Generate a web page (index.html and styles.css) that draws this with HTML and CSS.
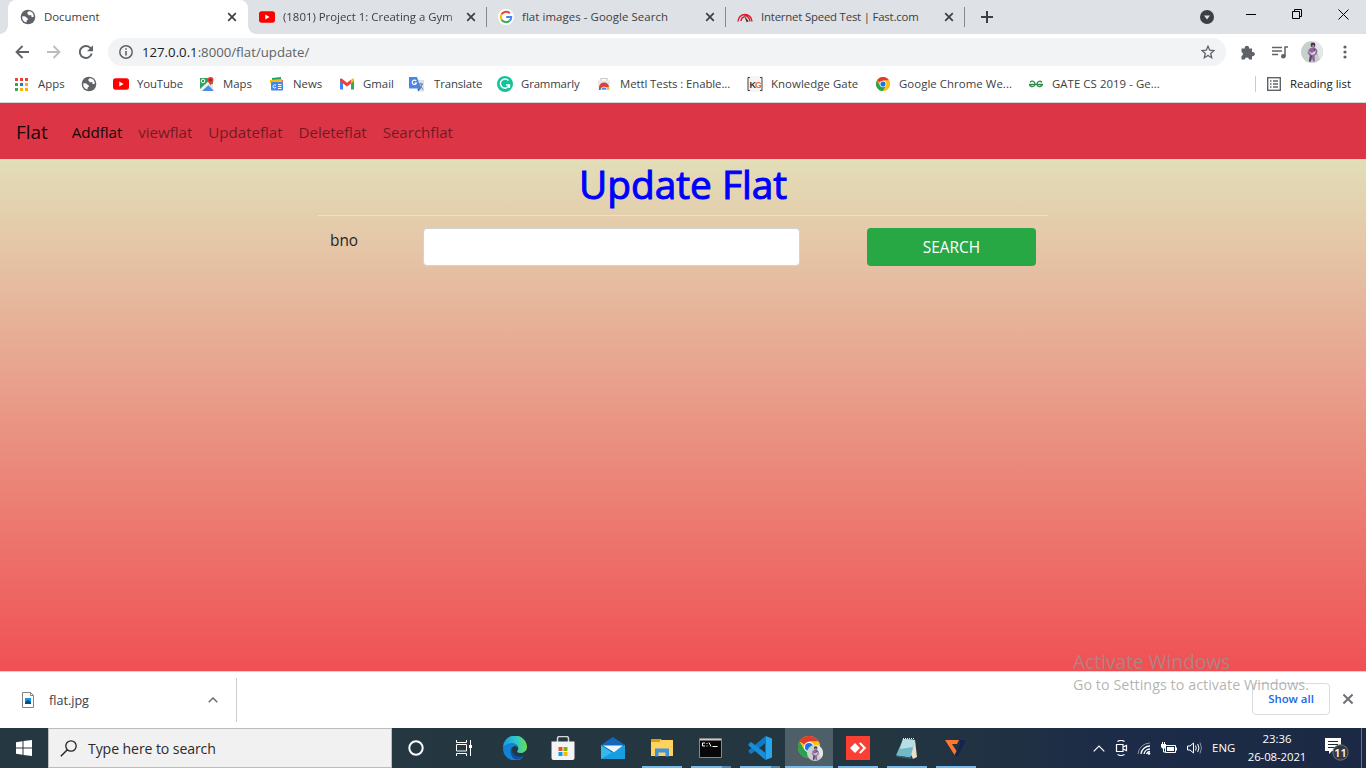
FILE: index.html
```html
<!DOCTYPE html>
<html lang="en">
<head>
<meta charset="utf-8">
<title>Document</title>
<link rel="stylesheet" href="styles.css">
</head>
<body>
<svg class="defs" width="0" height="0" aria-hidden="true">
  <symbol id="globe" viewBox="0 0 16 16"><circle cx="8" cy="8" r="7.3" fill="#5f6368"/><path d="M2.3 7.2c1.900-.1 3.800.2 4.100 1.300.3 1 1.600.5 1.600 1.700 0 .9-1.500.8-1.500 1.800v1.600A6 6 0 0 1 2.300 7.200zM8.900 2.100c-.2.9-1.700.9-1.700 1.900 0 .8 1 .6 1 1.400 0 .9 1.300 1.200 2.200.8 1-.4 1.200.6.9 1.400 1 .9 1.800.3 2.500.2A6 6 0 0 0 8.900 2.100z" fill="#fff"/></symbol>
  <symbol id="yt" viewBox="0 0 16 12"><rect width="16" height="11.4" y=".3" rx="2.6" fill="#f00"/><path d="M6.300 3.600v4.800L10.600 6z" fill="#fff"/></symbol>
  <symbol id="x" viewBox="0 0 10 10"><path d="M1.200 1.200l7.600 7.600M8.800 1.200L1.200 8.800" stroke="currentColor" stroke-width="1.700" fill="none"/></symbol>
  <symbol id="chrome" viewBox="0 0 24 24"><circle cx="12" cy="12" r="12" fill="#fbc116"/><path d="M12 12L1.600 6A12 12 0 0 1 22.400 6H12z" fill="#e33b2e"/><path d="M1.600 6A12 12 0 0 0 12 24l5.200-9L12 12 6.800 15z" fill="#2aa14c"/><path d="M12 6h10.400A12 12 0 0 1 12 24l5.200-9z" fill="#fbc116"/><circle cx="12" cy="12" r="5.600" fill="#fff"/><circle cx="12" cy="12" r="4.400" fill="#1a73e8"/></symbol>
  <symbol id="avatar" viewBox="0 0 22 22"><circle cx="11" cy="11" r="11" fill="#c7d0ca"/><path d="M11 0a11 11 0 0 1 8 18.500L16 10z" fill="#e3e8e6"/><circle cx="12" cy="4" r="2.400" fill="#47374f"/><path d="M8 8l3-1.500h3l2.500 3-1 4-2 1 .5 6h-2l-1.100-4-1 4.500H8L9 15l-2.500-3z" fill="#8b6a99"/><path d="M6.500 10l4.500 2 4-3-1 4-3 1z" fill="#e0cbe1"/><path d="M9 14l2 1-1 5H8zM12.500 7.500l2 1-1 2z" fill="#58416a"/><path d="M11.300 4h1.800v2.500h-1.800z" fill="#b38d94"/></symbol>
</svg>

<header class="tabs">
  <div class="tab tab-active"><svg class="fav"><use href="#globe"/></svg><span class="tab-title">Document</span><svg class="close"><use href="#x"/></svg></div>
  <div class="tab"><svg class="fav"><use href="#yt"/></svg><span class="tab-title t-yt">(1801) Project 1: Creating a Gym W</span><svg class="close"><use href="#x"/></svg></div>
  <div class="tab sep"><svg class="fav" viewBox="0 0 16 16"><circle cx="8" cy="8" r="8" fill="#fff"/><path d="M3.600 5.300A5.200 5.200 0 0 1 11.800 4.300" stroke="#ea4335" stroke-width="2" fill="none"/><path d="M3.600 5.300a5.200 5.200 0 0 0 0 5.400" stroke="#fbbc05" stroke-width="2" fill="none"/><path d="M3.600 10.700a5.200 5.200 0 0 0 8 1" stroke="#34a853" stroke-width="2" fill="none"/><path d="M8.200 8h5c0 1.700-.6 2.900-1.600 3.700" stroke="#4285f4" stroke-width="2" fill="none"/></svg><span class="tab-title t-flat">flat images - Google Search</span><svg class="close"><use href="#x"/></svg></div>
  <div class="tab sep"><svg class="fav" viewBox="0 0 16 16"><path d="M1 12.500A7 7 0 0 1 15 12.500M4 12A4.500 4.500 0 0 1 7.500 7.700M7.500 6.500a6 6 0 0 1 5.500 6" stroke="#e0182d" stroke-width="1.400" fill="none"/><path d="M7 6.500l4.700 5.700-2 1z" fill="#333"/></svg><span class="tab-title t-fast">Internet Speed Test | Fast.com</span><svg class="close"><use href="#x"/></svg></div>
  <div class="newtab sep"><svg width="12" height="12" viewBox="0 0 12 12"><path d="M6 0v12M0 6h12" stroke="#3c4043" stroke-width="2"/></svg></div>
  <div class="window-controls">
    <svg width="14" height="14" viewBox="0 0 14 14"><circle cx="7" cy="7" r="7" fill="#3c4043"/><path d="M4 5.500h6L7 9.500z" fill="#dee1e6"/></svg>
    <svg class="win-min" width="10" height="11" viewBox="0 0 10 11"><path d="M0 5.500h10" stroke="#000"/></svg>
    <svg class="win-max" width="11" height="11" viewBox="0 0 11 11"><path d="M.5 2.500h7v7h-7zM2.500 2.500v-2h7v7h-2" fill="none" stroke="#000"/></svg>
    <svg class="win-close" width="11" height="11" viewBox="0 0 11 11"><path d="M.5.5l10 10M10.500.5l-10 10" stroke="#000"/></svg>
  </div>
</header>

<div class="toolbar">
  <svg width="14" height="14" viewBox="0 0 14 14"><path d="M14 7H1.500M7.500 1L1.500 7l6 6" fill="none" stroke="#5f6368" stroke-width="1.800"/></svg>
  <svg width="14" height="14" viewBox="0 0 14 14"><path d="M0 7h12.500M6.500 1l6 6-6 6" fill="none" stroke="#bbbdc0" stroke-width="1.800"/></svg>
  <svg width="14" height="14" viewBox="0 0 14 14"><path d="M12.700 8.500A6 6 0 1 1 11 2.600l1 1" fill="none" stroke="#5f6368" stroke-width="1.900"/><path d="M14 .2v6H8z" fill="#5f6368"/></svg>
  <div class="omnibox">
    <svg width="14" height="14" viewBox="0 0 14 14"><circle cx="7" cy="7" r="6.200" fill="none" stroke="#5f6368" stroke-width="1.500"/><path d="M7 6v4.500M7 3.200v1.600" stroke="#5f6368" stroke-width="1.600"/></svg>
    <span class="url"><b>127.0.0.1</b>:8000/flat/update/</span>
    <svg width="14" height="14" viewBox="0 0 14 14"><path d="M7 1.200l1.700 4 4.300.4-3.300 2.900 1 4.200L7 10.500l-3.700 2.200 1-4.200L1 5.600l4.300-.4z" fill="none" stroke="#5f6368" stroke-width="1.300"/></svg>
  </div>
  <svg class="ext" width="15" height="15" viewBox="0 0 15 15"><path d="M1.500 3.500h3.300a2.200 2.200 0 1 1 4.200 0h3V7a2.200 2.200 0 1 1 0 4.200v3.300H9a2.100 2.100 0 0 0-4.200 0H1.500V11a2.100 2.100 0 0 0 0-4z" fill="#5f6368"/></svg>
  <svg class="media" width="17" height="13" viewBox="0 0 17 13"><path d="M0 1.500h10M0 5h10M0 8.500h6M13 10.500V1h3" fill="none" stroke="#5f6368" stroke-width="1.500"/><circle cx="11.300" cy="10.200" r="2.300" fill="#5f6368"/></svg>
  <svg class="me" width="22" height="22"><use href="#avatar"/></svg>
  <svg class="kebab" width="4" height="14" viewBox="0 0 4 14"><circle cx="2" cy="2" r="1.600" fill="#5f6368"/><circle cx="2" cy="7" r="1.600" fill="#5f6368"/><circle cx="2" cy="12" r="1.600" fill="#5f6368"/></svg>
</div>

<nav class="bookmarks">
  <div class="bm"><svg width="13" height="13" viewBox="0 0 13 13"><path d="M0 0h3v3H0zM5 0h3v3H5zM10 0h3v3h-3z" fill="#ea4335"/><path d="M0 5h3v3H0z" fill="#34a853"/><path d="M5 5h3v3H5z" fill="#1a73e8"/><path d="M10 5h3v3h-3zM5 10h3v3H5zM10 10h3v3h-3z" fill="#fbaf05"/><path d="M0 10h3v3H0z" fill="#34a853"/></svg><span>Apps</span></div>
  <div class="bm"><svg><use href="#globe"/></svg></div>
  <div class="bm"><svg><use href="#yt"/></svg><span class="s-yt">YouTube</span></div>
  <div class="bm"><svg viewBox="0 0 16 16"><path d="M1 2h13v13H1z" fill="#34a162"/><path d="M3 15l6-6 6 6z" fill="#4a89f3"/><path d="M1 13L12 3l2 2L3 15H1z" fill="#f3f3ee"/><path d="M8 8l6 6V8z" fill="#e4e4e0"/><circle cx="4" cy="5" r="1.800" fill="none" stroke="#fff"/><path d="M11.500 10C11 7 8.500 6.500 8.500 4a3 3 0 0 1 6 0c0 2.500-2.500 3-3 6z" fill="#df4235"/><circle cx="11.500" cy="4" r="1.200" fill="#8c201c"/></svg><span>Maps</span></div>
  <div class="bm"><svg viewBox="0 0 16 16"><path d="M3 2l9-1v5H3z" fill="#20a464"/><path d="M5 3l9 1-1 5H5z" fill="#ed4334"/><path d="M1 4l12-1v4H1z" fill="#fbbc04"/><rect x="2" y="6" width="12" height="8.500" rx="1" fill="#4285f4"/><path d="M7 9H5.500a1.500 1.500 0 1 0 1.400 2M9 8.500h3.500M9 10.500h3.500M9 12.500h3.500" stroke="#fff" fill="none"/></svg><span>News</span></div>
  <div class="bm"><svg viewBox="0 0 16 16"><path d="M1 4v9.500h3V7z" fill="#4285f4"/><path d="M12 7v6.500h3V4z" fill="#34a853"/><path d="M1 5V3.500c0-1.200 1.300-1.300 2-.8l5 4 4-3V7.500l-4 3-4-3z" fill="#ea4335"/><path d="M12 3.700l1-.8c1-.7 2-.1 2 1V5l-3 2.500z" fill="#fbbc04"/></svg><span>Gmail</span></div>
  <div class="bm"><svg viewBox="0 0 16 16"><path d="M6 4h9v11.500H9z" fill="#dce1e6"/><path d="M0 1h8l4 11.500H1a1 1 0 0 1-1-1z" fill="#4a86e8"/><path d="M7.200 5A2.200 2.200 0 1 0 7.500 7H5.500" fill="none" stroke="#fff" stroke-width="1.200"/><path d="M9.500 8H14M11.700 7v1M13 8c-.5 3-2 4-3 5M11 9.500l3 4" stroke="#607d9b" fill="none"/><path d="M8.500 12.500h3.500l-3 3z" fill="#3067c0"/></svg><span class="s-tr">Translate</span></div>
  <div class="bm"><svg viewBox="0 0 16 16"><circle cx="8" cy="8" r="8" fill="#15c39a"/><path d="M11.500 4.500A4.600 4.600 0 1 0 12.400 9H9M12.400 9v3" stroke="#fff" stroke-width="1.500" fill="none"/></svg><span class="s-gr">Grammarly</span></div>
  <div class="bm"><svg viewBox="0 0 16 16"><path d="M5 5V2.500h6V5" fill="none" stroke="#c9c9c9" stroke-width="1.200"/><path d="M2 4.500h12l-.5 9.500h-11z" fill="#e6e6e6"/><path d="M3 13.500V12a5 5 0 0 1 10-1L8 11z" fill="#df4034"/><path d="M3 11l3 3H3z" fill="#1b9d56"/><path d="M9 11h4v3H9z" fill="#fbc116"/><path d="M5 14a3 3 0 0 1 6 0z" fill="#4285f4" stroke="#fff" stroke-width=".7"/></svg><span class="s-mettl">Mettl Tests : Enable...</span></div>
  <div class="bm"><svg viewBox="0 0 16 16"><rect width="16" height="16" fill="#f5f5f5"/><path d="M3 1.500H1v13h2M13 1.500h2v13h-2" fill="none" stroke="#444"/><text x="2.500" y="11.500" class="kg">K<tspan fill="#e9712c">G</tspan></text></svg><span class="s-kg">Knowledge Gate</span></div>
  <div class="bm"><svg viewBox="0 0 16 16"><use href="#chrome" x="1" y="1" width="14" height="14"/></svg><span class="s-chrome">Google Chrome We...</span></div>
  <div class="bm"><svg viewBox="0 0 16 16"><path d="M1 8.500h14M2 6.200c1.500-1.500 4-1.500 4.800.8.800 2.500-1.300 4-3.300 3.500C2 10.200 1.500 9.500 1.500 8.500M14 6.200c-1.500-1.500-4-1.200-4.800.8-.8 2.500 1 4 3 3.500 1.500-.3 2.100-1 2.100-2" fill="none" stroke="#2f8d46" stroke-width="1.300"/></svg><span class="s-chrome">GATE CS 2019 - Ge...</span></div>
  <div class="reading"><svg width="14" height="14" viewBox="0 0 14 14"><rect x=".7" y=".7" width="12.600" height="12.600" fill="none" stroke="#5f6368" stroke-width="1.400"/><path d="M3 4h1.500M3 7h1.500M3 10h1.500M6 4h5M6 7h5M6 10h5" stroke="#5f6368" stroke-width="1.400"/></svg><span>Reading list</span></div>
</nav>

<main class="page">
  <nav class="navbar">
    <a class="brand">Flat</a>
    <a class="link active">Addflat</a><a class="link">viewflat</a><a class="link">Updateflat</a><a class="link">Deleteflat</a><a class="link">Searchflat</a>
  </nav>
  <section class="container">
    <h1>Update Flat</h1>
    <form class="row"><label for="bno">bno</label><input id="bno" type="text"><button type="button">SEARCH</button></form>
  </section>
</main>

<section class="downloads">
  <div class="file">
    <svg width="12" height="16" viewBox="0 0 12 16"><path d="M.5.5h8l3 3v12H.5z" fill="#fff" stroke="#858585"/><path d="M8.500.5v3h3" fill="none" stroke="#858585"/><path d="M3 6h6v6H3z" fill="#1596dd"/><path d="M3 10l3-2 3 2v2H3z" fill="#064d8c"/></svg>
    <span>flat.jpg</span>
    <svg class="chev" width="10" height="6" viewBox="0 0 10 6"><path d="M.7 5.300L5 1l4.300 4.300" fill="none" stroke="#6e7276" stroke-width="1.600"/></svg>
  </div>
  <button class="show-all" type="button">Show all</button>
  <svg class="dismiss"><use href="#x"/></svg>
  <div class="watermark"><div class="wm-title">Activate Windows</div><div class="wm-sub">Go to Settings to activate Windows.</div></div>
</section>

<footer class="taskbar">
  <div class="start"><svg width="16" height="16" viewBox="0 0 16 16"><path d="M0 2.200l6.500-1v6.300H0zM7.500 1L16 0v7.500H7.500zM0 8.500h6.500v6.300l-6.500-1zM7.500 8.500H16V16l-8.500-1z" fill="#fff"/></svg></div>
  <div class="search"><svg width="17" height="17" viewBox="0 0 17 17"><circle cx="11" cy="6" r="5.200" fill="none" stroke="#222" stroke-width="1.300"/><path d="M7.300 9.700L.8 16.200" stroke="#222" stroke-width="1.400"/></svg><span>Type here to search</span></div>
  <div class="apps">
    <div class="app"><svg width="16" height="16" viewBox="0 0 16 16"><circle cx="8" cy="8" r="6.700" fill="none" stroke="#fff" stroke-width="2"/></svg></div>
    <div class="app view"><svg width="17" height="16" viewBox="0 0 17 16"><path d="M.5 0v2.500h10V0M.5 16v-2.500h10V16M.5 4.500h10v6.500H.5zM14.500 0v16" fill="none" stroke="#fff"/><path d="M13 5h3v3h-3z" fill="#fff"/></svg></div>
    <div class="app nudge"><svg width="24" height="24" viewBox="0 0 24 24"><defs><linearGradient id="eg"><stop stop-color="#169be2"/><stop offset=".55" stop-color="#30c7cb"/><stop offset="1" stop-color="#69df4d"/></linearGradient></defs><path d="M0 12A12 12 0 0 1 24 11c0 4-3.500 6-7 6-2.500 0-3.500-1.200-2.500-2.300 2-2.500-.5-6.200-4.500-6.200C5 8 1.500 9.500 0 12z" fill="url(#eg)"/><path d="M0 12.500C1 9.500 5 7 9 7c5 0 7 3.500 6.500 6-.6-2.300-2.300-3.300-4-3-2.500.5-4 4-2.500 7.500 2 4 7 5.500 11.500 3.500A12 12 0 0 1 0 12.500z" fill="#1381d4"/><path d="M9.300 11C6 14 7.500 22 13.500 23.800c3-.3 6-1.800 8-4.700-5 3-12 1-12.500-5z" fill="#114f9f"/></svg></div>
    <div class="app"><svg width="24" height="24" viewBox="0 0 24 24"><path d="M6.500 6V2.500a2 2 0 0 1 2-2h7a2 2 0 0 1 2 2V6" fill="none" stroke="#d8d8d8" stroke-width="1.500"/><path d="M.5 5.500h23V22a2 2 0 0 1-2 2h-19a2 2 0 0 1-2-2z" fill="#f4f4f4"/><path d="M7.500 11h4v4h-4z" fill="#f04e24"/><path d="M12.500 11h4v4h-4z" fill="#7eb800"/><path d="M7.500 16h4v4h-4z" fill="#00a3ee"/><path d="M12.500 16h4v4h-4z" fill="#fdb900"/></svg></div>
    <div class="app nudge"><svg width="24" height="24" viewBox="0 0 24 24"><path d="M0 9L12 1l12 8-12 9z" fill="#1068bd"/><path d="M0 9l12 8 12-8v14H0z" fill="#35b8ee"/><path d="M0 23L24 9v14z" fill="#189ce2"/><path d="M2 9.500h20L13 16.300z" fill="#eef5f9"/></svg></div>
    <div class="app on nudge"><svg width="24" height="24" viewBox="0 0 24 24"><path d="M1 3h9l2 1h11v16H1z" fill="#ffd35c"/><path d="M1 3h9v3H1z" fill="#e69b00"/><path d="M5 12.500h14v8h-3.500v-4h-7v4H5z" fill="#3d94df"/></svg></div>
    <div class="app on more"><svg width="23" height="20" viewBox="0 0 23 20"><path d="M.5.500h22v19H.5z" fill="#080808" stroke="#888"/><path d="M1 1h21v1.500H1z" fill="#ccc"/><path d="M6 5H3.500v3H6M8 5v1M8 7.500v1M10 4.500l2 4M13.500 8.500h5" stroke="#fff" fill="none"/></svg></div>
    <div class="app on more"><svg width="24" height="24" viewBox="0 0 24 24"><path d="M17.500 0L24 2.500v19L17.500 24z" fill="#27a6f0"/><path d="M17.500 0v7L3 18l-2.500-2V14.500z" fill="#1278bf"/><path d="M17.500 24v-7L3 6 .5 8v1.500z" fill="#168fda"/></svg></div>
    <div class="app on current"><svg width="26" height="26" viewBox="0 0 26 26"><use href="#chrome" x="1" y="1" width="22" height="22"/><use href="#avatar" x="10" y="10" width="16" height="16"/></svg></div>
    <div class="app on"><svg width="24" height="24" viewBox="0 0 24 24"><path d="M0 0h24v24H0z" fill="#fb4033"/><path d="M9 7l5 5-5 5-5-5zM13 7.500l1.500-1.200L20.200 12l-5.700 5.700L13 16.500l4.200-4.500z" fill="#fff"/></svg></div>
    <div class="app on"><svg width="24" height="24" viewBox="0 0 24 24"><path d="M9 3l11 1 2 17-4 2z" fill="#e5dfcb"/><path d="M8 3l12 1-4.500 17.500L1 19.500z" fill="#72b9c7"/><path d="M8 3l12 1-2 7L5 13z" fill="#b7e0e4"/><path d="M1 19.500l14.500 2L17 23 2 21z" fill="#31646f"/><path d="M8 2.500h11" stroke="#e8eced" stroke-dasharray="1 1"/></svg></div>
    <div class="app on"><svg width="22" height="18" viewBox="0 0 22 18"><path d="M0 1h14l-2 4H7l4.500 7-2 4z" fill="#ff762e"/><path d="M15 1h6L13 17h-3l5-11z" fill="#15234f"/></svg></div>
  </div>
  <div class="tray">
    <svg width="12" height="7" viewBox="0 0 12 7"><path d="M.7 6.300L6 1l5.300 5.300" fill="none" stroke="#fff" stroke-width="1.200"/></svg>
    <svg class="meet" width="13" height="16" viewBox="0 0 12 16"><path d="M2 1.500Q5.500-.5 9 1.500M2 14.500q3.500 2 7 0M1 4.500h6.500v7H1zM7.500 7L11 5.500v5L7.500 9" fill="none" stroke="#fff" stroke-width="1.200"/></svg>
    <svg width="14" height="14" viewBox="0 0 14 14"><path d="M1 13A12 12 0 0 1 13 2" stroke="#8b98a4" fill="none"/><path d="M4 13a9 9 0 0 1 9-8M7 13a6 6 0 0 1 6-5M9.500 13a4 4 0 0 1 3.500-2.500" stroke="#fff" fill="none" stroke-width="1.300"/><circle cx="12" cy="12.500" r="1.300" fill="#fff"/></svg>
    <svg width="16" height="12" viewBox="0 0 16 12"><path d="M4.500 3.500h10v7h-10z" stroke="#fff" fill="none"/><path d="M6 5h7v4H6zM14.500 5.500H16v3h-1.500zM0 2h5v3L3 7H2L0 5z" fill="#fff"/><path d="M1.500 0v2M3.500 0v2M2.500 6v4h2" stroke="#fff" fill="none"/></svg>
    <svg width="16" height="14" viewBox="0 0 16 14"><path d="M.5 5h2.500L6.500 2v10L3 9H.5zM8.500 4.500q1.500 2.500 0 5M10.700 3q2.500 4 0 8" stroke="#fff" fill="none"/><path d="M13 1.500q3 5.500 0 11" stroke="#87949f" fill="none"/></svg>
    <span class="lang">ENG</span>
    <div class="clock"><span>23:36</span><span class="date">26-08-2021</span></div>
    <svg class="action" width="26" height="24" viewBox="0 0 26 24"><path d="M1 1h16v13H8l-3 3v-3H1z" fill="#fff"/><path d="M4 4.500h10M4 7.500h10M4 10.500h7" stroke="#1d2b3b"/><circle cx="16.500" cy="15.500" r="7.700" fill="#343941" stroke="#6d757d"/><text x="16.500" y="19.500" text-anchor="middle" class="badge">11</text></svg>
    <i class="peek"></i>
  </div>
</footer>
</body>
</html>
```
FILE: styles.css
```css
* { box-sizing: border-box; }
body { margin: 0; width: 1366px; height: 768px; overflow: hidden; display: flex; flex-direction: column; background: #fff; font: 11.4px/16px "Open Sans", "Noto Sans", sans-serif; color: #3c4043; }
svg { display: block; flex: none; }
span, a { white-space: nowrap; }
.defs { position: absolute; }

.tabs { height: 34px; flex: none; display: flex; background: #dee1e6; padding-left: 8px; }
.tab { width: 239px; display: flex; align-items: center; padding: 0 11px; position: relative; }
.tab-active { width: 240px; background: #fff; border-radius: 8px 8px 0 0; padding: 0 11px 0 12px; }
.tab-active::before, .tab-active::after { content: ""; position: absolute; bottom: 0; width: 8px; height: 8px; }
.tab-active::before { left: -8px; background: radial-gradient(circle at 0 0, #dee1e6 7.500px, #fff 8px); }
.tab-active::after { right: -8px; background: radial-gradient(circle at 100% 0, #dee1e6 7.500px, #fff 8px); }
.fav { width: 16px; height: 16px; margin-right: 8px; }
.tab-title { flex: 1; min-width: 0; margin-right: 12px; }
.close { width: 10px; height: 10px; }
.t-yt { -webkit-mask-image: linear-gradient(90deg, #000 164px, transparent 182px); mask-image: linear-gradient(90deg, #000 164px, transparent 182px); }
.t-flat { letter-spacing: .08px; }
.t-fast { letter-spacing: -.2px; }
.sep::before { content: ""; position: absolute; left: -1px; top: 7px; width: 1px; height: 20px; background: #85888d; }
.newtab { position: relative; width: 44px; display: flex; align-items: center; padding-left: 16px; }
.window-controls { margin-left: auto; display: flex; padding-right: 17px; padding-top: 9px; align-items: flex-start; }
.window-controls svg:first-child { margin-top: 1px; }
.win-min { margin: 0 0 0 32px; }
.win-max { margin: 0 0 0 36px; }
.win-close { margin: 0 0 0 35px; }

.toolbar { height: 36px; flex: none; display: flex; align-items: center; padding: 0 20px 0 15px; }
.toolbar > svg { margin-right: 18px; }
.toolbar > svg:nth-child(3) { margin-right: 15px; }
.omnibox { width: 1118px; flex: none; height: 28px; border-radius: 14px; background: #f1f3f4; display: flex; align-items: center; padding: 0 11px; font-size: 13.200px; color: #5f6368; }
.url { flex: 1; margin-left: 9px; }
.url b { font-weight: 400; color: #202124; }
.toolbar > .ext { margin: 0 17px 0 14px; }
.toolbar > .media { margin-right: 12px; }
.toolbar > .me { margin-right: 20px; }
.toolbar > .kebab { margin: 0; }

.bookmarks { height: 33px; flex: none; border-bottom: 1px solid #d5d7da; display: grid; grid-template-columns: 66px 32px 86px 70px 70px 70px 88px 99px 151px 128px 153px 227px 1fr; padding: 0 14px 4px 15px; align-items: center; }
.bm, .reading { display: flex; align-items: center; }
.bm svg { width: 16px; height: 16px; margin-right: 8px; }
.bm:first-child svg { width: 13px; height: 13px; margin-right: 10px; }
.s-yt, .s-tr { letter-spacing: -.12px; }
.s-tr { margin-left: 1px; }
.s-gr { letter-spacing: -.15px; }
.s-mettl { letter-spacing: -.08px; }
.s-kg, .s-chrome { letter-spacing: .06px; }
.kg { font: bold 9px "Liberation Sans", sans-serif; letter-spacing: -1px; fill: #333; }
.reading { border-left: 1px solid #c8cacc; height: 16px; padding-left: 11px; gap: 9px; color: #202124; }

.page { height: 568px; flex: none; background: linear-gradient(#e1eec3, #f05053); font-size: 15.400px; color: #212529; }
.navbar { height: 56px; background: #dc3545; display: flex; align-items: center; padding: 2px 16px 0; color: rgba(0,0,0,.5); font-size: 15.200px; letter-spacing: -.06px; }
.brand { font-size: 19px; color: rgba(0,0,0,.9); margin-right: 24px; }
.link { margin-right: 16px; }
.link.active { color: rgba(0,0,0,.9); }
.container { width: 730px; margin: 0 auto; }
h1 { margin: 0; height: 57px; border-bottom: 1px solid #dee2e6; text-align: center; font-size: 38.800px; line-height: 51px; font-weight: 400; -webkit-text-stroke: 1px blue; color: blue; }
.row { display: flex; padding: 12px 12px 0; align-items: flex-start; }
.row label { width: 93px; line-height: 24px; padding-top: 1px; }
.row input { width: 377px; height: 38px; border: 1px solid #ced4da; border-radius: 4px; background: #fff; margin: 0 67px 0 0; }
.row button { width: 169px; height: 38px; border: 0; border-radius: 4px; background: #28a745; color: #fff; font: inherit; padding: 2px 0 0; }

.downloads { height: 57px; flex: none; border-top: 1px solid #d5d7da; display: flex; align-items: center; position: relative; padding-right: 12px; }
.file { width: 237px; height: 44px; border-right: 1px solid #ccc; display: flex; align-items: center; padding: 0 18px 0 22px; font-size: 12.600px; }
.file span { flex: 1; margin-left: 15px; padding-top: 2px; }
.show-all { margin-left: auto; width: 78px; height: 32px; border: 1px solid #dadce0; border-radius: 4px; background: #fff; color: #1a66e8; font: 600 11.400px "Open Sans", sans-serif; padding: 0 0 1px; margin-top: -2px; }
.dismiss { width: 12px; height: 12px; margin: -3px 0 0 12px; color: #6e7276; }
.watermark { position: absolute; left: 1073px; top: -24px; color: rgba(150,150,150,.72); white-space: nowrap; }
.wm-title { font-size: 19.200px; line-height: 28px; }
.wm-sub { font-size: 14.300px; line-height: 17px; letter-spacing: .05px; }

.taskbar { height: 40px; flex: none; display: flex; background: linear-gradient(90deg, #253841, #243640 65%, #1c2b47 82%, #1b2944); color: #fff; }
.start { width: 48px; display: flex; align-items: center; justify-content: center; }
.search { width: 344px; background: #f1f1f1; border: 1px solid #bcbcbc; color: #2b2b2b; display: flex; align-items: center; padding-left: 11px; gap: 11px; font-size: 14.100px; padding-top: 1px; }
.search span { letter-spacing: -.1px; }
.apps { display: flex; }
.app { width: 48px; margin-right: 1.100px; display: flex; align-items: center; justify-content: center; position: relative; }
.view { padding-right: 2px; }
.nudge { padding-left: 2px; }
.on::after { content: ""; position: absolute; left: 4px; right: 4px; bottom: 0; height: 2px; background: #76b9ed; }
.nudge.on::after { left: 5px; right: 3px; }
.more::after { background: linear-gradient(90deg, #76b9ed 31px, #5688ac 31px); }
.current { background: #4f5f67; padding-left: 3px; }
.current::after { left: 0; right: 0; }
.tray { margin-left: auto; display: flex; align-items: center; gap: 10px; }
.tray > svg:first-child { margin-left: -2px; }
.meet { margin-right: -1px; }
.lang { width: 25px; margin-left: -1px; letter-spacing: .05px; }
.clock { width: 62px; display: flex; flex-direction: column; align-items: center; line-height: 18px; margin-left: -1px; }
.date { letter-spacing: -.1px; }
.action { margin: 2px 1px 0 6px; }
.badge { font: 600 11px "Open Sans", sans-serif; fill: #fff; }
.peek { width: 1px; height: 40px; background: #687580; margin-right: 4px; }
```
